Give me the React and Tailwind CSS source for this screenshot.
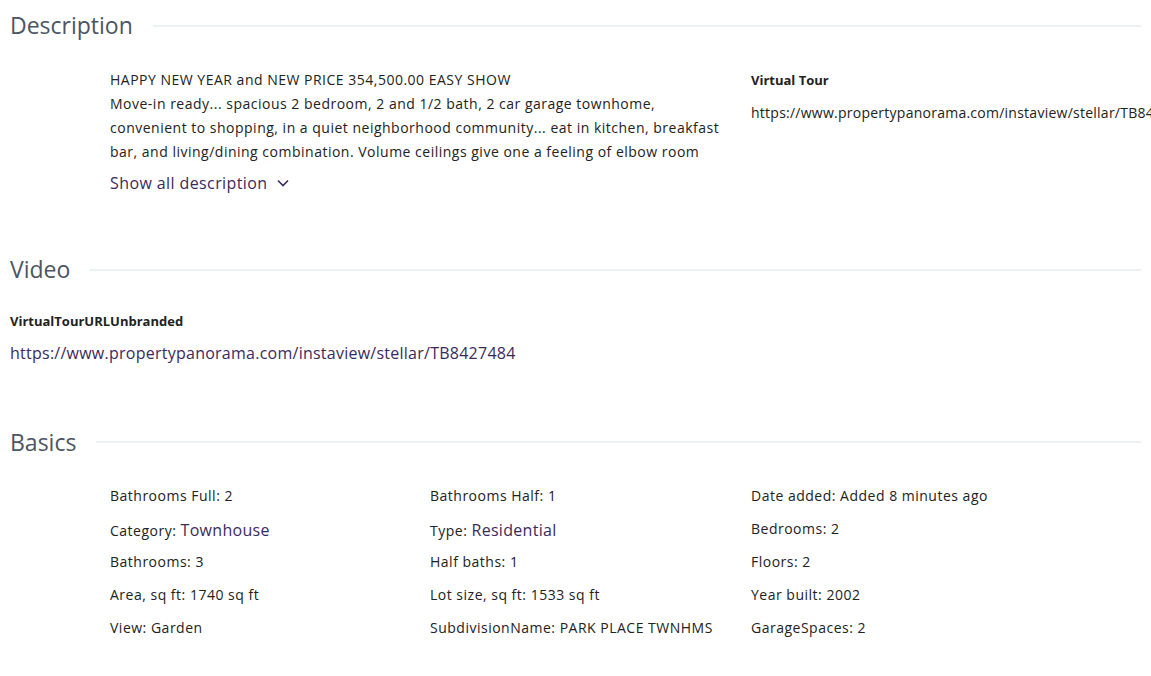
import React from 'react'

const font = { fontFamily: '"Open Sans", "Liberation Sans", sans-serif' }

function Heading({ title, className = '' }) {
    return (
        <div className={"flex items-center " + className}>
            <h2 className="text-[23px] leading-none text-[#4b5563] pl-[10px] pr-5">{title}</h2>
            <div className="flex-1 h-[2px] bg-[#eef1f4] mr-[10px]"></div>
        </div>
    )
}

function Item({ label, value, link }) {
    return (
        <div className="h-[33px] text-[14px] tracking-[0.5px] text-[#222]">
            {label}: {link ? <span className="text-[16px] tracking-[0.3px] text-[#3b2a5c]">{value}</span> : value}
        </div>
    )
}

export default function App() {
    const basics = [
        ['Bathrooms Full', '2'], ['Bathrooms Half', '1'], ['Date added', 'Added 8 minutes ago'],
        ['Category', 'Townhouse', true], ['Type', 'Residential', true], ['Bedrooms', '2'],
        ['Bathrooms', '3'], ['Half baths', '1'], ['Floors', '2'],
        ['Area, sq ft', '1740 sq ft'], ['Lot size, sq ft', '1533 sq ft'], ['Year built', '2002'],
        ['View', 'Garden'], ['SubdivisionName', 'PARK PLACE TWNHMS'], ['GarageSpaces', '2'],
    ]
    return (
        <div className="w-[1151px] h-[676px] overflow-hidden bg-white" style={font}>
            <Heading title="Description" className="pt-[14px]" />
            <div className="flex pl-[110px] pt-[31px]">
                <div className="w-[614px] shrink-0">
                    <div className="h-[93px] overflow-hidden text-[14px] leading-[24px] tracking-[0.5px] text-[#222]">
                        HAPPY NEW YEAR and NEW PRICE 354,500.00 EASY SHOW<br />
                        Move-in ready... spacious 2 bedroom, 2 and 1/2 bath, 2 car garage townhome, convenient to shopping, in a quiet neighborhood community... eat in kitchen, breakfast bar, and living/dining combination. Volume ceilings give one a feeling of elbow room and the fireplace adds warmth.
                    </div>
                    <div className="flex items-center gap-2 mt-[10px] text-[16px] leading-[24px] tracking-[0.4px] text-[#3b2a5c]">
                        Show all description
                        <svg width="14" height="14" viewBox="0 0 14 14" fill="none" stroke="#3b2a5c" strokeWidth="1.6">
                            <path d="M2 4.5l5 5 5-5" />
                        </svg>
                    </div>
                </div>
                <div className="ml-[27px] whitespace-nowrap">
                    <div className="text-[13px] font-bold text-[#222] leading-[24px]">Virtual Tour</div>
                    <div className="text-[14px] tracking-[0.25px] text-[#222] mt-[10px]">https://www.propertypanorama.com/instaview/stellar/TB8427484</div>
                </div>
            </div>

            <Heading title="Video" className="mt-[63px]" />
            <div className="pl-[10px] pt-[31px]">
                <div className="text-[13px] font-bold text-[#222]">VirtualTourURLUnbranded</div>
                <div className="text-[16px] tracking-[0.25px] text-[#3b2a5c] mt-[9px]">https://www.propertypanorama.com/instaview/stellar/TB8427484</div>
            </div>

            <Heading title="Basics" className="mt-[66px]" />
            <div className="grid grid-cols-[320px_321px_320px] pl-[110px] pt-[31px]">
                {basics.map((b, i) => <Item key={i} label={b[0]} value={b[1]} link={b[2]} />)}
            </div>
        </div>
    )
}
